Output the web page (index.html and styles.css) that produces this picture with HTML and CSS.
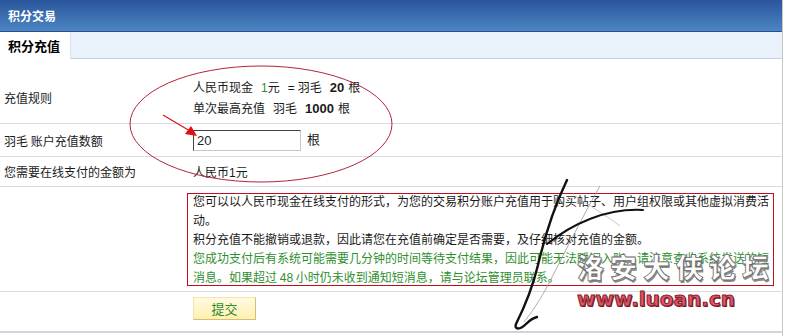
FILE: index.html
```html
<!DOCTYPE html>
<html lang="zh-CN">
<head>
  <meta charset="UTF-8">
  <title>积分交易</title>
  <link rel="stylesheet" href="styles.css">
</head>
<body>
  <div class="page">
    <div class="title-bar">积分交易</div>
    <div class="tab-bar">
      <span class="tab current">积分充值</span>
      <span class="tab-rest"></span>
    </div>

    <table class="form-table">
      <tr class="row-rule">
        <td class="label">充值规则</td>
        <td class="value">
          人民币现金<span class="num green gap-l">1</span>元<span class="eq">=</span>羽毛<b class="num gap-l">20</b><span class="gap-s">根</span><br>
          单次最高充值<span class="gap-l">羽毛</span><b class="num gap-l">1000</b><span class="gap-s">根</span>
        </td>
      </tr>
      <tr class="row-amount">
        <td class="label">羽毛 账户充值数额</td>
        <td class="value"><input class="amount" type="text" value="20"><span class="unit">根</span></td>
      </tr>
      <tr class="row-pay">
        <td class="label">您需要在线支付的金额为</td>
        <td class="value">人民币<span class="num">1</span>元</td>
      </tr>
      <tr class="row-note">
        <td class="label"></td>
        <td class="value">
          <div class="note">
            <div class="note-text">
              您可以以人民币现金在线支付的形式，为您的交易积分账户充值用于购买帖子、用户组权限或其他虚拟消费活动。<br>
              积分充值不能撤销或退款，因此请您在充值前确定是否需要，及仔细核对充值的金额。<br>
              <span class="green">您成功支付后有系统可能需要几分钟的时间等待支付结果，因此可能无法瞬间入账，请注意查收系统发送的短消息。如果超过 <span class="num">48</span> 小时仍未收到通知短消息，请与论坛管理员联系。</span>
            </div>
          </div>
        </td>
      </tr>
      <tr class="row-submit">
        <td class="label"></td>
        <td class="value"><button class="submit" type="button">提交</button></td>
      </tr>
    </table>

    <!-- annotation drawn over the screenshot -->
    <svg class="marks" width="785" height="336" viewBox="0 0 785 336">
      <ellipse cx="261" cy="124" rx="131" ry="58" fill="none" stroke="#b3243c" stroke-width="1"/>
      <line x1="163" y1="115" x2="190" y2="131" stroke="#d81010" stroke-width="1.2"/>
      <polygon points="197,136 185,134 191,126" fill="#e01010"/>
      <path d="M600 186 C585 212 566 250 548 285 C540 300 532 312 524 322" fill="none" stroke="#999" stroke-width="0.8"/>
      <path d="M575 196 C590 206 604 214 620 226" fill="none" stroke="#bbb" stroke-width="0.8"/>
      <path d="M567 180 C555 205 545 235 538 265 C532 290 522 312 516 324 C514 330 520 330 526 324 C530 320 533 318 537 317" fill="none" stroke="#111" stroke-width="2.4" stroke-linecap="round" stroke-linejoin="round"/>
      <path d="M547 244 C572 224 606 208 643 210" fill="none" stroke="#111" stroke-width="2" stroke-linecap="round"/>
    </svg>
    <div class="watermark">
      <span class="wm-cn">洛安大侠论坛</span>
      <span class="wm-url">www.luoan.cn</span>
    </div>
  </div>
</body>
</html>
```

FILE: styles.css
```css
body {
  margin: 0;
  background-color: #fff;
  font-family: "Noto Sans CJK SC", "Liberation Sans", sans-serif;
  font-size: 12px;
  color: #1a1a1a;
}

.page {
  position: relative;
  width: 782px;
  height: 336px;
  border-right: 1px solid #c9c9c9;
  overflow: hidden;
}

.title-bar {
  height: 31px;
  line-height: 31px;
  padding-left: 8px;
  background: linear-gradient(#2b559c, #4b86c3);
  border-bottom: 1px solid #2a4f8a;
  color: #fff;
  font-weight: bold;
  font-size: 12px;
}

.tab-bar {
  display: flex;
  height: 27px;
}

.tab {
  width: 62px;
  padding-left: 8px;
  line-height: 27px;
  font-weight: bold;
  font-size: 13px;
  color: #000;
  background-color: #fff;
}

.tab-rest {
  flex: 1;
  background-color: #e9f1fb;
  border-left: 1px solid #dbe4ef;
  border-bottom: 1px solid #c6d0df;
}

.form-table {
  margin-top: 11px;
  width: 782px;
  border-collapse: collapse;
}

.form-table td {
  border-bottom: 1px solid #d7dce4;
  padding: 0;
  vertical-align: middle;
}

.form-table .label {
  width: 189px;
  padding-left: 4px;
  box-sizing: border-box;
}

.form-table .value {
  padding-left: 4px;
}

.form-table .row-rule td {
  height: 51px;
  line-height: 19px;
  padding-top: 2px;
}

.row-amount td {
  height: 32px;
}

.row-pay td {
  height: 29px;
}

.row-note td {
  height: 104px;
}

.form-table .row-submit td {
  height: 34px;
  vertical-align: top;
  padding-top: 5px;
  border-bottom: 2px solid #cfd5de;
}

.num {
  font-family: "Liberation Sans", Arial, sans-serif;
  font-size: 12px;
}

b.num {
  font-size: 13px;
}

.gap-l {
  margin-left: 8px;
}

.gap-s {
  margin-left: 4px;
}

.eq {
  margin: 0 3px 0 8px;
  font-family: "Liberation Sans", Arial, sans-serif;
}

.green {
  color: #2f8f2f;
}

.amount {
  width: 100px;
  height: 15px;
  margin: 0;
  padding: 2px 3px;
  border: 1px solid #c8c8c8;
  border-top-color: #444;
  border-left-color: #444;
  font-family: "Liberation Sans", Arial, sans-serif;
  font-size: 13px;
  color: #222;
  vertical-align: middle;
}

.unit {
  margin-left: 6px;
  font-size: 13px;
}

.note {
  width: 580px;
  height: 91px;
  margin-left: -6px;
  padding-left: 5px;
  border: 1px solid #c20e1a;
  line-height: 19px;
}

.note-text {
  margin-top: -3px;
}

.submit {
  width: 63px;
  height: 23px;
  background: linear-gradient(#fffbe0, #fff0b0);
  border: 1px solid #f3e5b0;
  border-right-color: #d9bd72;
  border-bottom-color: #d9bd72;
  color: #2f8a2f;
  font-family: "Noto Sans CJK SC", sans-serif;
  font-size: 13px;
  padding: 0;
}

.marks {
  position: absolute;
  left: 0;
  top: 0;
  pointer-events: none;
}

.watermark {
  position: absolute;
  left: 577px;
  top: 249px;
  width: 205px;
  pointer-events: none;
}

.wm-cn {
  display: block;
  font-size: 27px;
  font-weight: 900;
  line-height: 36px;
  letter-spacing: 6px;
  color: #fdfdfd;
  -webkit-text-stroke: 0.8px #6a6a6a;
  text-shadow: 1px 2px 0 #8a8a8a;
}

.wm-url {
  display: block;
  margin-top: 3px;
  font-family: "DejaVu Sans", sans-serif;
  font-size: 20px;
  font-weight: bold;
  line-height: 22px;
  color: #d9576a;
  -webkit-text-stroke: 1px #8a1e2a;
  text-shadow: 1px 1px 0 #6a1020;
}
```
